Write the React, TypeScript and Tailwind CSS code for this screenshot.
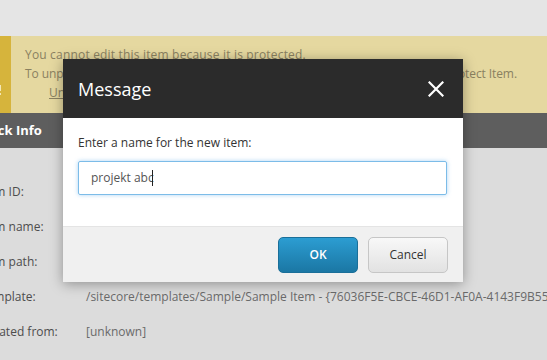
import React from "react";

const rows: [string, string][] = [
  ["Item ID:", ""],
  ["Item name:", ""],
  ["Item path:", ""],
  ["Template:", "/sitecore/templates/Sample/Sample Item - {76036F5E-CBCE-46D1-AF0A-4143F9B557AA}"],
  ["Created from:", "[unknown]"],
];

export default function App() {
  return (
    <div
      className="relative w-[547px] h-[360px] overflow-hidden bg-[#dcdcdc]"
      style={{ fontFamily: "'Open Sans', 'Liberation Sans', sans-serif" }}
    >
      {/* top band */}
      <div className="h-[36px] bg-[#e5e5e5]" />
      {/* warning banner */}
      <div className="flex h-[77px] bg-[#e5d8a0]">
        <div className="w-[11px] shrink-0 bg-[#d6b43c] flex items-end pb-[18px] overflow-hidden">
          <svg width="6" height="10" viewBox="0 0 6 10" className="-ml-[3px]">
            <rect x="2" y="0" width="2" height="6" fill="#f3e7b8" />
            <rect x="2" y="8" width="2" height="2" fill="#f3e7b8" />
          </svg>
        </div>
        <div className="pl-[14px] pt-[9px] text-[12px] leading-[19px] text-[#8a8160] whitespace-nowrap">
          <div className="tracking-[0.18px]">You cannot edit this item because it is protected.</div>
          <div className="tracking-[-0.09px]">To unprotect this item, on the Configure tab, in the Attributes group, click Unprotect Item.</div>
          <div className="pl-[24px] underline">Unprotect Item</div>
        </div>
      </div>
      {/* quick info bar */}
      <div className="h-[35px] bg-[#5e5e5e] flex items-center overflow-hidden">
        <span className="-ml-[25px] text-white text-[13px] font-bold whitespace-nowrap">Quick Info</span>
      </div>
      {/* content rows */}
      <div className="pt-[26px] -ml-[20px] text-[12px] whitespace-nowrap">
        {rows.map(([label, value]) => (
          <div key={label} className="flex items-center h-[35px]">
            <div className="w-[106px] shrink-0 text-[#4d4d4d]">{label}</div>
            <div className="text-[#6a6a6a]">{value}</div>
          </div>
        ))}
      </div>

      {/* dialog */}
      <div className="absolute left-[63px] top-[59px] w-[400px] shadow-[0_2px_12px_rgba(0,0,0,0.35)]">
        <div className="h-[59px] bg-[#2b2b2b] flex items-center justify-between pl-[15px] pr-[19px]">
          <span className="text-white text-[18px] leading-none">Message</span>
          <svg width="16" height="16" viewBox="0 0 16 16">
            <path d="M1.5 1.5 L14.5 14.5 M14.5 1.5 L1.5 14.5" stroke="#ffffff" strokeWidth="2.2" strokeLinecap="square" />
          </svg>
        </div>
        <div className="bg-white h-[108px] pl-[15px] pr-[16px] pt-[16px]">
          <div className="text-[12px] leading-[18px] text-[#333333]">Enter a name for the new item:</div>
          <div className="mt-[9px] h-[34px] border border-[#7cbce8] rounded-[2px] shadow-[0_0_4px_rgba(102,175,233,0.55)] flex items-center pl-[12px] text-[12px] text-[#555555]">
            <span>projekt abc</span>
            <span className="w-px h-[16px] bg-[#222222] -ml-[2px]" />
          </div>
        </div>
        <div className="h-[56px] bg-[#f0f0f0] border-t border-[#e4e4e4] flex items-center justify-end gap-[10px] pr-[15px]">
          <button className="w-[80px] h-[36px] rounded-[5px] border border-[#1a6f99] bg-gradient-to-b from-[#2c9dd2] to-[#1b77a4] text-white text-[12px] font-semibold">
            OK
          </button>
          <button className="w-[80px] h-[36px] rounded-[5px] border border-[#c6c6c6] bg-gradient-to-b from-[#f8f8f8] to-[#e2e2e2] text-[#333333] text-[12px]">
            Cancel
          </button>
        </div>
      </div>
    </div>
  );
}
